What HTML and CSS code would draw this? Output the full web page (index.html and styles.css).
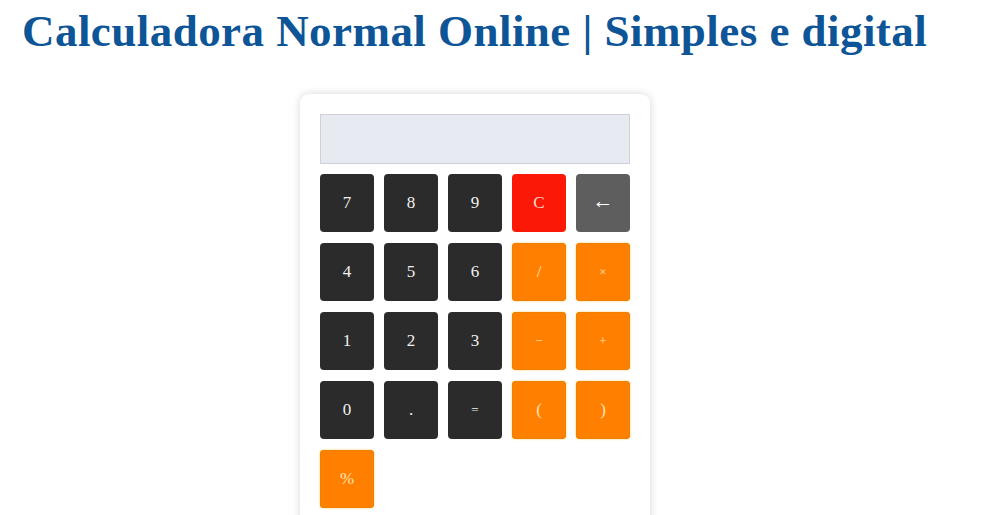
FILE: index.html
```html
<!DOCTYPE html>
<html lang="pt">
<head>
<meta charset="utf-8">
<title>Calculadora Normal Online</title>
<link rel="stylesheet" href="styles.css">
</head>
<body>
<h1 class="title">Calculadora Normal Online | Simples e digital</h1>
<div class="calc">
  <div class="display"></div>
  <div class="keys">
    <button class="key dark">7</button>
    <button class="key dark">8</button>
    <button class="key dark">9</button>
    <button class="key red">C</button>
    <button class="key gray">&larr;</button>
    <button class="key dark">4</button>
    <button class="key dark">5</button>
    <button class="key dark">6</button>
    <button class="key orange">/</button>
    <button class="key orange small">&times;</button>
    <button class="key dark">1</button>
    <button class="key dark">2</button>
    <button class="key dark">3</button>
    <button class="key orange small">&minus;</button>
    <button class="key orange small">+</button>
    <button class="key dark">0</button>
    <button class="key dark">.</button>
    <button class="key dark small">=</button>
    <button class="key orange">(</button>
    <button class="key orange">)</button>
    <button class="key orange">%</button>
  </div>
</div>
</body>
</html>
```
FILE: styles.css
```css
html, body {
  margin: 0;
  padding: 0;
  background: #ffffff;
}
body {
  font-family: "Liberation Serif", "DejaVu Serif", serif;
  padding: 0 0 0 22px;
}
.title {
  margin: 6px 0 0 0;
  font-size: 45px;
  line-height: 50px;
  font-weight: bold;
  color: #0d5596;
  letter-spacing: 0.45px;
  white-space: nowrap;
}
.calc {
  margin: 38px 0 0 278px;
  width: 310px;
  padding: 20px;
  background: #fff;
  border-radius: 9px;
  box-shadow: 0 0 8px rgba(0,0,0,0.16);
  height: 420px;
}
.display {
  height: 48px;
  background: #e8eaf1;
  border: 1px solid #cfd1d6;
}
.keys {
  margin-top: 10px;
  display: grid;
  grid-template-columns: repeat(5, 54px);
  grid-auto-rows: 58px;
  column-gap: 10px;
  row-gap: 11px;
}
.key {
  border: none;
  border-radius: 4px;
  font-family: "Liberation Serif", "DejaVu Serif", serif;
  font-size: 17px;
  color: #ffffff;
  padding: 0;
}
.key.small { font-size: 13px; }
.dark { background: #2b2b2b; color: #f0f0f0; }
.red { background: #fb1807; color: #ffd9d0; }
.gray { background: #5e5e5e; font-size: 21px; line-height: 1; padding-bottom: 3px; }
.orange {
  background: #ff8000;
  color: #ffe2b8;
  box-shadow: inset 0 0 0 1px #ee8200, 0 0 2px rgba(255,170,0,0.7);
}
```
